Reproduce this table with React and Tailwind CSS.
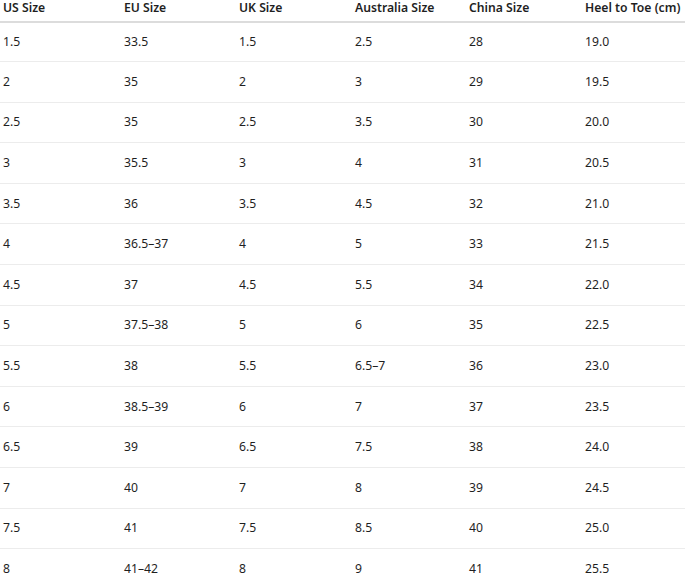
import React from "react";

const rows = [
  ["1.5", "33.5", "1.5", "2.5", "28", "19.0"],
  ["2", "35", "2", "3", "29", "19.5"],
  ["2.5", "35", "2.5", "3.5", "30", "20.0"],
  ["3", "35.5", "3", "4", "31", "20.5"],
  ["3.5", "36", "3.5", "4.5", "32", "21.0"],
  ["4", "36.5–37", "4", "5", "33", "21.5"],
  ["4.5", "37", "4.5", "5.5", "34", "22.0"],
  ["5", "37.5–38", "5", "6", "35", "22.5"],
  ["5.5", "38", "5.5", "6.5–7", "36", "23.0"],
  ["6", "38.5–39", "6", "7", "37", "23.5"],
  ["6.5", "39", "6.5", "7.5", "38", "24.0"],
  ["7", "40", "7", "8", "39", "24.5"],
  ["7.5", "41", "7.5", "8.5", "40", "25.0"],
  ["8", "41–42", "8", "9", "41", "25.5"],
];

const headers = ["US Size", "EU Size", "UK Size", "Australia Size", "China Size", "Heel to Toe (cm)"];
const cols = "grid grid-cols-[121px_115px_116px_114px_116px_103px]";

export default function App() {
  return (
    <div
      className="w-[685px] bg-white text-[#1f1f1f] text-[12.2px] leading-[16px]"
      style={{ fontFamily: '"Noto Sans", "Open Sans", Arial, sans-serif' }}
    >
      <div className={`${cols} h-[23px] border-b-2 border-[#dcdcdc] font-semibold items-start`}>
        {headers.map((h) => (
          <div key={h} className="pl-[3px] whitespace-nowrap">{h}</div>
        ))}
      </div>
      {rows.map((r, i) => (
        <div
          key={i}
          className={`${cols} items-center ${i === 0 ? "h-[39px]" : "h-[40.6px]"} ${
            i < rows.length - 1 ? "border-b border-[#ececec]" : ""
          }`}
        >
          {r.map((c, j) => (
            <div key={j} className="pl-[3px] whitespace-nowrap">{c}</div>
          ))}
        </div>
      ))}
    </div>
  );
}
